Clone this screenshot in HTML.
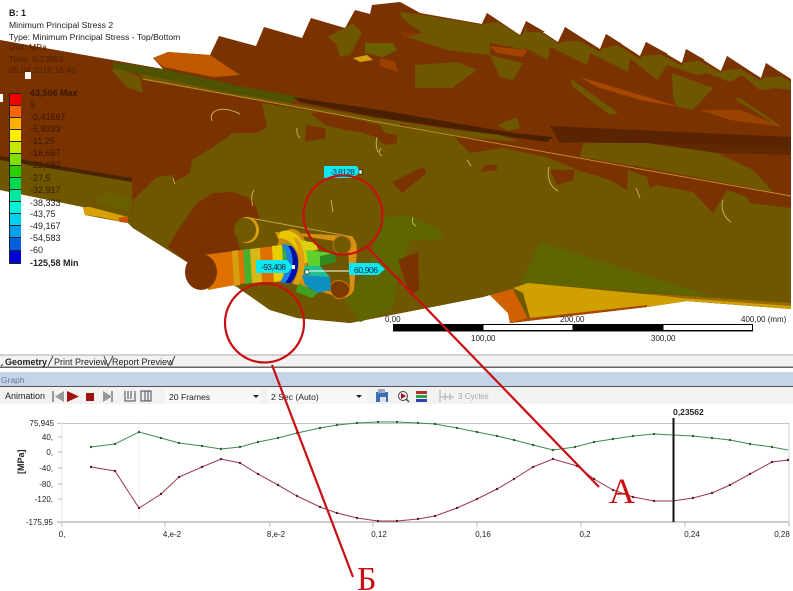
<!DOCTYPE html>
<html><head><meta charset="utf-8"><style>
html,body{margin:0;padding:0;background:#fff;width:793px;height:591px;overflow:hidden}
svg{display:block}
text{font-family:"Liberation Sans",sans-serif}
</style></head><body>
<svg width="793" height="591" viewBox="0 0 793 591" xmlns="http://www.w3.org/2000/svg">
<rect width="793" height="591" fill="#fff"/>
<!-- base silhouette: brown -->
<polygon fill="#7a3200" points="0,40 163,69 153,58 168,52 210,55 219,36 256,46 264,27 302,38 311,18 345,28 355,10 370,14 372,5 400,2 420,13 482,24 487,13 520,35 526,21 558,42 565,27 600,49 606,34 640,56 646,42 682,63 686,49 721,71 727,56 761,78 766,63 791,79 791,309 687,301 647,307 510,323 508,313 490,295 483,297 350,323 297,318 270,310 237,287 187,262 133,228 128,223 85,215 83,207 0,190"/>
<!-- orange flap -->
<polygon fill="#c05800" points="153,58 168,52 210,55 240,75 213,77 163,67"/>
<!-- olive band along the teeth -->
<polygon fill="#6f5700" points="400,12 422,15 482,25 487,16 522,36 527,24 560,44 566,34 600,52 607,39 640,59 647,47 682,66 687,54 721,73 727,61 761,81 766,68 791,82 791,90 775,88 760,90 742,75 730,82 707,73 697,75 667,65 657,80 630,58 628,72 590,53 587,65 550,47 548,60 520,45 527,50 490,43 490,55 447,50 407,37 422,33 402,18"/>
<!-- brown teeth tips -->
<g fill="#7a3200">
<polygon points="526,21 545,32 527,32"/><polygon points="565,27 585,40 560,42"/><polygon points="606,34 622,44 600,49"/><polygon points="646,42 668,54 640,56"/><polygon points="686,49 705,60 682,63"/><polygon points="727,56 745,68 721,71"/><polygon points="766,63 785,76 761,78"/>
<polygon points="487,13 500,22 482,24"/><polygon points="400,2 420,13 402,10"/>
<polygon points="550,47 590,75 570,80 548,72"/>
</g>
<!-- olive chunks -->
<g fill="#6f5700">
<polygon points="415,65 457,62 477,70 452,88 415,88"/>
<polygon points="490,55 523,63 513,80 500,77"/>
<polygon points="672,73 713,88 693,110 677,107 673,97"/>
<polygon points="570,78 618,113 610,115 573,87"/>
<polygon points="738,97 780,125 776,125 736,100"/>
<polygon points="497,125 517,117 520,128 508,131"/>
<polygon points="328,37 353,23 362,33 350,55 340,57 337,45"/>
<polygon points="113,65 140,77 143,93 127,87 113,72"/>
<polygon points="380,48 396,48 383,56"/>
</g>
<polygon fill="#6a6000" points="365,43 393,43 397,50 383,57 365,53"/>
<polygon fill="#d0a010" points="353,58 367,55 373,60 360,62"/>
<!-- orange streaks -->
<polygon fill="#a84800" points="580,77 667,103 680,107 640,100 597,87"/>
<polygon fill="#9a4200" points="700,110 740,110 783,127 730,120"/>
<polygon fill="#9a4000" points="380,58 395,62 398,72 380,66"/>
<polygon fill="#a04400" points="490,46 528,50 523,57 497,53"/>
<polygon fill="#8a3a00" points="400,32 420,34 405,38"/>
<!-- lower plate olive -->
<polygon fill="#6f5700" points="133,200 157,177 173,175 173,183 190,173 192,160 213,147 233,133 257,133 267,127 262,103 400,126 791,197 791,309 687,301 647,307 510,323 508,313 490,295 483,297 350,323 297,318 270,310 237,287 187,262 133,228"/>
<!-- beam bands -->
<polygon fill="#4f5200" points="113,62 163,69 240,86 300,97 290,103 225,92 140,74 113,68"/>
<polygon fill="#6f5700" points="140,74 225,92 290,103 400,122 400,126 143,80"/>
<polygon fill="#4a2000" points="293,97 380,110 513,133 553,137 547,142 380,118 300,102"/>
<polygon fill="#5a2400" points="550,126 791,137 791,147 587,142 560,143"/>
<polygon fill="#5f2800" points="587,142 791,147 791,155 690,152"/>
<polygon fill="#6f5700" points="583,143 647,143 717,153 753,170 773,192 647,168 580,157"/>
<polygon fill="#6f5700" points="380,118 440,128 500,135 520,142 440,135"/>
<!-- brown blobs under crease -->
<g fill="#7a3200">
<polygon points="453,135 791,197 791,208 750,203 747,197 727,190 713,213 693,192 657,185 650,188 647,177 628,170 627,190 610,180 577,170 547,157 503,148 470,153 460,143"/>
<polygon points="310,113 323,112 380,125 385,133 397,135 397,143 385,145 375,137 360,132 345,130 325,125"/>
<polygon points="550,170 575,170 573,180 557,185"/>
<polygon points="392,182 423,167 427,173 402,193"/>
<polygon points="383,133 397,135 397,143 385,145"/>
<polygon points="398,260 418,252 419,290 410,295"/>
<polygon points="306,125 325,128 326,138 305,142"/>
<polygon points="485,165 497,165 497,170 480,172"/>
</g>
<!-- left beam olive -->
<polygon fill="#6f5700" points="0,158 132,180 133,228 128,223 85,215 83,207 0,190"/>
<polygon fill="#4a2400" points="0,156 132,178 132,182 0,160"/>
<polygon fill="#6a5f00" points="97,200 107,192 132,198 130,212 97,203"/>
<polygon fill="#d8a000" points="83,207 90,207 128,217 128,223 100,217 85,215"/>
<polygon fill="#c85400" points="118,218 128,216 128,223 120,222"/>
<!-- brown hub blob -->
<polygon fill="#7a3200" points="168,247 180,227 197,203 213,193 233,192 253,200 260,218 238,223 237,237 240,250 203,255 187,262"/>
<!-- green tints -->
<polygon fill="#5e6600" points="380,218 410,216 443,232 440,240 410,240 400,270 392,310 360,322 345,300 370,265"/>
<polygon fill="#5f6500" points="540,242 713,297 520,283 527,270"/>
<polygon fill="#7a3200" points="398,260 418,252 419,290 410,295"/>
<!-- yellow/orange flaps -->
<polygon fill="#d0a000" points="513,288 528,283 687,298 791,305 791,309 687,301 647,307 530,318 523,293"/>
<polygon fill="#9a6c00" points="640,293 791,303 791,306 680,298"/>
<polygon fill="#d06000" points="490,295 513,289 528,318 510,323 508,313"/>
<polygon fill="#a84800" points="530,318 647,305 647,307 510,323"/>
<!-- pale crease and marks -->
<polyline fill="none" stroke="#c08a30" stroke-width="1" points="143,79 400,126 791,196"/>
<g fill="none" stroke="#c8ac50" stroke-width="1">
<path d="M212 121 C208 110 222 105 240 114"/><path d="M297 128 Q296 134 300 138"/><path d="M381 148 Q377 154 382 156"/><path d="M467 160 L471 166"/><path d="M549 167 C546 180 552 188 558 191"/><path d="M636 188 L640 198"/><path d="M723 200 C720 210 725 218 731 222"/><path d="M413 217 Q411 224 416 226"/><path d="M173 178 L175 184"/><path d="M254 190 Q250 196 253 206"/><path d="M331 200 L333 212"/><path d="M377 137 Q375 145 378 152"/>
</g>
<!-- plate -->
<polyline fill="none" stroke="#c8a040" stroke-width="1" points="250,218 353,237"/>
<path fill="#d89010" d="M275 232 L350 236 C355 238 357 243 357 250 L354 290 C350 298 342 300 335 296 L300 285Z"/>
<path fill="#6f5700" d="M295 235 L348 243 L350 288 L345 292 L310 290 L300 260Z"/>
<!-- pins -->
<ellipse cx="247" cy="230" rx="12" ry="13" fill="#d8a010"/>
<ellipse cx="245" cy="230" rx="11" ry="12" fill="#6f5a00"/>
<circle cx="342" cy="245" r="9" fill="#6f5a00" stroke="#b87010" stroke-width="1"/>
<path fill="#7a3a00" stroke="#d87810" d="M331 284 C336 278 346 280 350 288 C350 296 342 300 336 298 C330 294 329 288 331 284Z"/>
<!-- hub -->
<ellipse cx="292" cy="256" rx="16" ry="27" fill="#c88a10"/>
<path fill="#e8c800" d="M280 232 C292 226 306 238 309 262 L302 264 C298 248 290 238 278 238Z"/>
<polygon fill="#d8d010" points="300,240 316,243 318,250 304,252"/>
<polygon fill="#60d030" points="306,250 333,253 333,258 320,266 308,266"/>
<polygon fill="#2e8a20" points="320,256 335,253 336,262 320,266"/>
<polygon fill="#20c090" points="300,266 320,266 330,277 306,277"/>
<polygon fill="#1090c0" points="302,275 330,277 331,290 317,293 305,285"/>
<path fill="#40a020" d="M298 283 L318 293 L312 298 L296 292Z"/>
<!-- shaft -->
<path fill="#e07000" d="M203 255 L282 245 L284 282 L252 282 L208 290Z"/>
<polygon fill="#d8a010" points="232,251 238,250 240,285 234,286"/>
<polygon fill="#48b030" points="243,250 250,249 252,283 245,284"/>
<polygon fill="#d8b818" points="250,249 260,248 262,282 252,283"/>
<polygon fill="#e8d000" points="272,246 282,245 284,280 274,282"/>
<polygon fill="#30b040" points="282,245 290,244 292,280 284,282"/>
<path fill="#2080e0" d="M285 244 C296 250 298 272 288 284 L280 282 C288 270 289 254 282 245Z"/>
<path fill="#0010a8" d="M291 246 C300 252 301 272 291 283 L285 283 C294 272 295 255 288 246Z"/>
<path fill="#e0a010" d="M297 238 C306 248 308 270 298 285 L293 284 C302 270 301 250 293 238Z"/>
<ellipse cx="201" cy="272" rx="16" ry="18" fill="#7a3200"/>
<!-- callouts -->
<path fill="#10e8f0" d="M324 166 L357 166 L360 172 L353 178 L324 178Z"/>
<text x="330" y="175" font-size="8.500" fill="#235" textLength="25">-3,8128</text>
<rect x="359" y="170" width="3" height="4" fill="#fff" stroke="#000" stroke-width=".5"/>
<path fill="#10e8f0" d="M256 260 L287 260 L293 267 L287 273 L256 273Z"/>
<text x="261" y="270" font-size="8.500" fill="#124" textLength="25">-93,408</text>
<rect x="292" y="265" width="3" height="4" fill="#fff"/>
<rect x="305" y="270" width="4" height="4" fill="#fff" stroke="#000" stroke-width=".6"/>
<line x1="309" y1="271" x2="350" y2="271" stroke="#fff" stroke-width="1"/>
<path fill="#10e8f0" d="M349 263 L378 263 L385 269 L378 275 L349 275Z"/>
<text x="354" y="273" font-size="8.500" fill="#124" textLength="24">60,906</text>
<!-- header text -->
<g font-size="8.600" fill="#1c1c1c">
<text x="9" y="16" font-weight="700" font-size="9">B: 1</text>
<text x="9" y="28">Minimum Principal Stress 2</text>
<text x="9" y="40">Type: Minimum Principal Stress - Top/Bottom</text>
</g>
<g font-size="8.600" fill="#4a2000">
<text x="9" y="50">Unit: MPa</text>
<text x="9" y="62">Time: 0,23562</text>
<text x="9" y="73">05.04.2018 15:40</text>
</g>
<rect x="25" y="72" width="6" height="7" fill="#fff"/>
<rect x="0" y="94" width="3" height="8" fill="#fff"/>
<!-- legend -->
<rect x="9" y="93" width="12" height="171" fill="#222"/>
<rect x="10" y="94" width="11" height="11" fill="#f00000"/>
<rect x="10" y="106" width="11" height="11" fill="#ff6600"/>
<rect x="10" y="118" width="11" height="11" fill="#ffb000"/>
<rect x="10" y="130" width="11" height="11" fill="#ffee00"/>
<rect x="10" y="142" width="11" height="11" fill="#c4e800"/>
<rect x="10" y="154" width="11" height="11" fill="#80e000"/>
<rect x="10" y="166" width="11" height="11" fill="#28d000"/>
<rect x="10" y="178" width="11" height="11" fill="#00d850"/>
<rect x="10" y="190" width="11" height="11" fill="#00e8a0"/>
<rect x="10" y="202" width="11" height="11" fill="#00f0d8"/>
<rect x="10" y="214" width="11" height="11" fill="#00d0f0"/>
<rect x="10" y="226" width="11" height="11" fill="#00a0f0"/>
<rect x="10" y="238" width="11" height="12" fill="#0060e0"/>
<rect x="10" y="251" width="11" height="12" fill="#0000d8"/>
<g font-size="9" fill="#3a1800">
<text x="30" y="96" font-weight="700">43,506 Max</text>
<text x="30" y="108">5</text>
<text x="30" y="120">-0,41667</text>
<text x="30" y="132">-5,8333</text>
<text x="30" y="144">-11,25</text>
<text x="30" y="156">-16,667</text>
<text x="30" y="168">-22,083</text>
<text x="30" y="181">-27,5</text>
<text x="30" y="193">-32,917</text>
</g>
<g font-size="9" fill="#222">
<text x="30" y="206">-38,333</text>
<text x="30" y="217">-43,75</text>
<text x="30" y="229">-49,167</text>
<text x="30" y="241">-54,583</text>
<text x="30" y="253">-60</text>
<text x="30" y="266" font-weight="700">-125,58 Min</text>
</g>
<!-- scale -->
<g font-size="8" fill="#222">
<text x="385" y="322">0,00</text>
<text x="560" y="322">200,00</text>
<text x="741" y="322">400,00 (mm)</text>
<text x="471" y="341">100,00</text>
<text x="651" y="341">300,00</text>
</g>
<rect x="393" y="324" width="90" height="7" fill="#000"/>
<rect x="483" y="324.500" width="90" height="6" fill="#fff" stroke="#000" stroke-width="1"/>
<rect x="573" y="324" width="90" height="7" fill="#000"/>
<rect x="663" y="324.500" width="89.500" height="6" fill="#fff" stroke="#000" stroke-width="1"/>
<line x1="393" y1="331.500" x2="753" y2="331.500" stroke="#888"/>
<!-- tabs -->
<rect x="0" y="355" width="793" height="12" fill="#f2f2f2"/>
<line x1="0" y1="355" x2="793" y2="355" stroke="#aaa"/>
<rect x="0" y="366.500" width="793" height="1.500" fill="#666"/>
<g font-size="9" fill="#222">
<text x="5" y="365" font-weight="700">Geometry</text>
<text x="54" y="365">Print Preview</text>
<text x="112" y="365">Report Preview</text>
</g>
<path fill="none" stroke="#444" d="M48 366 L53 356 M104 356 L108 366 L113 356 M170 366 L175 356 M1 366 L3 364"/>
<!-- graph header -->
<rect x="0" y="372" width="793" height="14" fill="#c5d4e8"/>
<text x="1" y="383" font-size="8.500" fill="#6a7a90">Graph</text>
<rect x="0" y="386" width="793" height="1" fill="#555"/>
<rect x="0" y="387" width="793" height="17" fill="#f2f2f2"/>
<text x="5" y="399" font-size="9" fill="#222">Animation</text>
<path fill="#999" d="M52 391h2v11h-2zM64 391v11l-9-5.500z"/>
<path fill="#a01010" d="M67 391l12 5.500-12 5.500z"/>
<rect x="86" y="393" width="8" height="8" fill="#a01010"/>
<path fill="#999" d="M103 391v11l9-5.500zM111 391h2v11h-2z"/>
<g fill="none" stroke="#445" stroke-width="1"><path d="M125 391v10h10v-10M128 391v8M131 391v8M141 391h10v10h-10zM145 391v10M148 391v10"/></g>
<rect x="165" y="389" width="96" height="14" fill="#f8f8f8"/>
<text x="169" y="400" font-size="8.600" fill="#222">20 Frames</text>
<path fill="#222" d="M253 395h6l-3 3z"/>
<rect x="267" y="389" width="100" height="14" fill="#f8f8f8"/>
<text x="271" y="400" font-size="8.600" fill="#222">2 Sec (Auto)</text>
<path fill="#222" d="M356 395h6l-3 3z"/>
<rect x="376" y="392" width="12" height="10" fill="#3a70b0"/><rect x="378" y="389" width="7" height="4" fill="#9ab"/>
<rect x="380" y="397" width="6" height="5" fill="#dde"/>
<circle cx="403" cy="396" r="4.500" fill="#eee" stroke="#444"/><path fill="#a01010" d="M401 393l5 3-5 3z"/><path stroke="#444" stroke-width="1.500" d="M406 399l3 3"/>
<rect x="416" y="391" width="11" height="3" fill="#b03030"/><rect x="416" y="395" width="11" height="3" fill="#30a050"/><rect x="416" y="399" width="11" height="3" fill="#3040b0"/>
<path fill="none" stroke="#aaa" d="M440 390v12M440 397h14M445 393v7M450 393v7"/>
<text x="458" y="399" font-size="8" fill="#aaa">3 Cycles</text>
<!-- chart -->
<line x1="57" y1="423.500" x2="789" y2="423.500" stroke="#c4c4c4"/>
<line x1="57" y1="522" x2="789" y2="522" stroke="#999"/>
<line x1="789" y1="423" x2="789" y2="522" stroke="#ccc"/>
<line x1="62" y1="423" x2="62" y2="522" stroke="#e4e4e4"/>
<line x1="139" y1="423" x2="139" y2="522" stroke="#eee"/>
<g stroke="#bbb"><line x1="58" y1="437" x2="62" y2="437"/><line x1="58" y1="452" x2="62" y2="452"/><line x1="58" y1="468" x2="62" y2="468"/><line x1="58" y1="484" x2="62" y2="484"/><line x1="58" y1="499" x2="62" y2="499"/><line x1="62" y1="522" x2="62" y2="527"/><line x1="165" y1="522" x2="165" y2="527"/><line x1="270" y1="522" x2="270" y2="527"/><line x1="373" y1="522" x2="373" y2="527"/><line x1="477" y1="522" x2="477" y2="527"/><line x1="581" y1="522" x2="581" y2="527"/><line x1="685" y1="522" x2="685" y2="527"/><line x1="789" y1="522" x2="789" y2="527"/></g>
<g font-size="8" fill="#222" text-anchor="end">
<text x="54" y="426">75,945</text><text x="53" y="440">40,</text><text x="53" y="455">0,</text><text x="53" y="471">-40,</text><text x="53" y="487">-80,</text><text x="53" y="502">-120,</text><text x="53" y="525">-175,95</text>
</g>
<text x="0" y="0" transform="translate(24,474) rotate(-90)" font-size="9" font-weight="700" fill="#222">[MPa]</text>
<g font-size="8" fill="#222" text-anchor="middle">
<text x="62" y="537">0,</text><text x="172" y="537">4,e-2</text><text x="276" y="537">8,e-2</text><text x="379" y="537">0,12</text><text x="483" y="537">0,16</text><text x="585" y="537">0,2</text><text x="692" y="537">0,24</text><text x="782" y="537">0,28</text>
</g>
<text x="673" y="415" font-size="8.500" font-weight="700" fill="#222">0,23562</text>
<polyline fill="none" stroke="#3f8a4c" stroke-width="1" points="91,447 115,444 139,432 161,438 179,443 202,446 221,449 240,447 258,442 278,438 297,433 320,428 337,425 357,423 378,422 397,422 418,423 435,424 457,428 477,432 497,436 514,440 533,445 553,450 575,447 594,442 613,439 633,436 654,434 673,435 693,436 712,438 730,440 750,444 772,447 788,450"/>
<g fill="#2f5a38"><circle cx="91" cy="447" r="1.200"/><circle cx="115" cy="444" r="1.200"/><circle cx="139" cy="432" r="1.200"/><circle cx="161" cy="438" r="1.200"/><circle cx="179" cy="443" r="1.200"/><circle cx="202" cy="446" r="1.200"/><circle cx="221" cy="449" r="1.200"/><circle cx="240" cy="447" r="1.200"/><circle cx="258" cy="442" r="1.200"/><circle cx="278" cy="438" r="1.200"/><circle cx="297" cy="433" r="1.200"/><circle cx="320" cy="428" r="1.200"/><circle cx="337" cy="425" r="1.200"/><circle cx="357" cy="423" r="1.200"/><circle cx="378" cy="422" r="1.200"/><circle cx="397" cy="422" r="1.200"/><circle cx="418" cy="423" r="1.200"/><circle cx="435" cy="424" r="1.200"/><circle cx="457" cy="428" r="1.200"/><circle cx="477" cy="432" r="1.200"/><circle cx="497" cy="436" r="1.200"/><circle cx="514" cy="440" r="1.200"/><circle cx="533" cy="445" r="1.200"/><circle cx="553" cy="450" r="1.200"/><circle cx="575" cy="447" r="1.200"/><circle cx="594" cy="442" r="1.200"/><circle cx="613" cy="439" r="1.200"/><circle cx="633" cy="436" r="1.200"/><circle cx="654" cy="434" r="1.200"/><circle cx="693" cy="436" r="1.200"/><circle cx="712" cy="438" r="1.200"/><circle cx="730" cy="440" r="1.200"/><circle cx="750" cy="444" r="1.200"/><circle cx="772" cy="447" r="1.200"/></g>
<polyline fill="none" stroke="#9a3a4a" stroke-width="1" points="91,467 115,471 139,508 161,494 179,477 202,467 221,459 240,463 258,474 278,485 297,496 320,507 337,513 357,518 378,521 397,521 418,519 435,516 457,508 477,499 497,489 514,479 533,467 553,459 577,466 594,479 613,490 633,497 654,501 673,501 693,498 712,493 730,485 750,474 772,462 788,460"/>
<g fill="#5a1a28"><circle cx="91" cy="467" r="1.200"/><circle cx="115" cy="471" r="1.200"/><circle cx="139" cy="508" r="1.200"/><circle cx="161" cy="494" r="1.200"/><circle cx="179" cy="477" r="1.200"/><circle cx="202" cy="467" r="1.200"/><circle cx="221" cy="459" r="1.200"/><circle cx="240" cy="463" r="1.200"/><circle cx="258" cy="474" r="1.200"/><circle cx="278" cy="485" r="1.200"/><circle cx="297" cy="496" r="1.200"/><circle cx="320" cy="507" r="1.200"/><circle cx="337" cy="513" r="1.200"/><circle cx="357" cy="518" r="1.200"/><circle cx="378" cy="521" r="1.200"/><circle cx="397" cy="521" r="1.200"/><circle cx="418" cy="519" r="1.200"/><circle cx="435" cy="516" r="1.200"/><circle cx="457" cy="508" r="1.200"/><circle cx="477" cy="499" r="1.200"/><circle cx="497" cy="489" r="1.200"/><circle cx="514" cy="479" r="1.200"/><circle cx="533" cy="467" r="1.200"/><circle cx="553" cy="459" r="1.200"/><circle cx="577" cy="466" r="1.200"/><circle cx="594" cy="479" r="1.200"/><circle cx="613" cy="490" r="1.200"/><circle cx="633" cy="497" r="1.200"/><circle cx="654" cy="501" r="1.200"/><circle cx="693" cy="498" r="1.200"/><circle cx="712" cy="493" r="1.200"/><circle cx="730" cy="485" r="1.200"/><circle cx="750" cy="474" r="1.200"/><circle cx="772" cy="462" r="1.200"/><circle cx="788" cy="460" r="1.200"/></g>
<rect x="672.500" y="418" width="2" height="104" fill="#111"/>
<!-- red annotations -->
<g fill="none" stroke="#c80f14" stroke-width="2.200">
<circle cx="343" cy="215" r="39.500"/>
<circle cx="264.500" cy="323" r="39.500"/>
<line x1="367" y1="247" x2="599" y2="487"/>
<line x1="272" y1="365" x2="353" y2="577"/>
</g>
<text x="609" y="503" font-size="36" fill="#c80f14" style="font-family:'Liberation Serif',serif">А</text>
<text x="357" y="590" font-size="34" fill="#c80f14" style="font-family:'Liberation Serif',serif">Б</text>
</svg>
</body></html>
